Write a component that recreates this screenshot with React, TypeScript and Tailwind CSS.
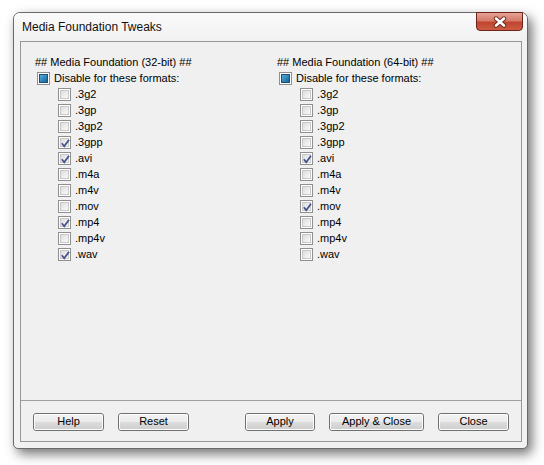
import React from "react";

const formats = [".3g2", ".3gp", ".3gp2", ".3gpp", ".avi", ".m4a", ".m4v", ".mov", ".mp4", ".mp4v", ".wav"];
const left = new Set([".3gpp", ".avi", ".mp4", ".wav"]);
const right = new Set([".avi", ".mov"]);

function Box({ checked }: { checked: boolean }) {
  return (
    <div className="w-[13px] h-[13px] border border-[#8f8f8f] bg-white p-[1px] shrink-0">
      <div className="relative w-full h-full border border-[#c8c8c8] bg-gradient-to-br from-[#dcdcdc] to-[#fafafa]">
        {checked && (
          <svg className="absolute -left-[1px] -top-[1px]" width="11" height="11" viewBox="0 0 11 11">
            <path d="M1.8 5.3 L4.2 8.2 L9 1.8" fill="none" stroke="#43558a" strokeWidth="1.8" />
          </svg>
        )}
      </div>
    </div>
  );
}

function Indet() {
  return (
    <div className="w-[13px] h-[13px] border border-[#8f8f8f] bg-white p-[1px] shrink-0">
      <div className="w-full h-full border border-[#1d4f78] bg-gradient-to-br from-[#4fb0dc] to-[#1b6396]" />
    </div>
  );
}

function Column({ title, set }: { title: string; set: Set<string> }) {
  return (
    <div className="flex flex-col">
      <div className="h-[16px] leading-[16px]">{title}</div>
      <div className="h-[16px] flex items-center pl-[2px] gap-[4px]">
        <Indet />
        <span className="leading-[16px]">Disable for these formats:</span>
      </div>
      {formats.map((f) => (
        <div key={f} className="h-[16px] flex items-center pl-[23px] gap-[4px]">
          <Box checked={set.has(f)} />
          <span className="leading-[16px]">{f}</span>
        </div>
      ))}
    </div>
  );
}

function Btn({ label, w }: { label: string; w: string }) {
  return (
    <div className={`${w} h-[18px] rounded-[3px] border border-[#707070]`}>
      <div className="w-full h-full rounded-[2px] border border-[#fcfcfc] bg-[linear-gradient(#f2f2f2_0%,#ebebeb_50%,#dddddd_50%,#cfcfcf_100%)] flex items-center justify-center leading-none">
        {label}
      </div>
    </div>
  );
}

export default function App() {
  return (
    <div
      className="w-[544px] h-[465px] bg-white pt-[12px] pl-[13px] text-black"
      style={{ fontFamily: '"Liberation Sans", Arial, sans-serif' }}
    >
      <div className="w-[515px] h-[437px] rounded-t-[7px] rounded-b-[5px] border border-[#6a6a6a] bg-[#f2f2f2] shadow-[4px_5px_12px_rgba(0,0,0,0.55)] flex flex-col">
        <div className="h-[28px] flex justify-between pl-[8px] pr-[4px] rounded-t-[6px] bg-gradient-to-b from-[#fafafa] to-[#f1f1f1]">
          <div className="text-[12px] leading-[28px] text-[#111]">Media Foundation Tweaks</div>
          <div className="-mt-[1px] w-[47px] h-[19px] rounded-b-[4px] border border-[#6e2418] bg-[linear-gradient(#e6a496_0%,#d47a68_45%,#bf4530_55%,#cc5c44_100%)] flex items-center justify-center">
            <svg width="16" height="12" viewBox="0 0 16 12">
              <path d="M4 2.5 L12 9.5 M12 2.5 L4 9.5" stroke="#6a2a1e" strokeWidth="4.4" strokeLinecap="round" />
              <path d="M4 2.5 L12 9.5 M12 2.5 L4 9.5" stroke="#ffffff" strokeWidth="2.6" strokeLinecap="round" />
            </svg>
          </div>
        </div>
        <div className="flex-1 pl-[6px] pr-[5px] pb-[6px] flex">
          <div className="flex-1 border border-[#979797] bg-[#f0f0f0] flex flex-col text-[11px]">
            <div className="flex-1 pt-[12px] pl-[14px] grid grid-cols-[242px_1fr]">
              <Column title="## Media Foundation (32-bit) ##" set={left} />
              <Column title="## Media Foundation (64-bit) ##" set={right} />
            </div>
            <div className="h-[41px] border-t border-[#a0a0a0] flex items-center justify-between px-[12px] pt-[1px]">
              <div className="flex gap-[14px]">
                <Btn label="Help" w="w-[71px]" />
                <Btn label="Reset" w="w-[71px]" />
              </div>
              <div className="flex gap-[14px]">
                <Btn label="Apply" w="w-[70px]" />
                <Btn label="Apply & Close" w="w-[95px]" />
                <Btn label="Close" w="w-[71px]" />
              </div>
            </div>
          </div>
        </div>
      </div>
    </div>
  );
}
